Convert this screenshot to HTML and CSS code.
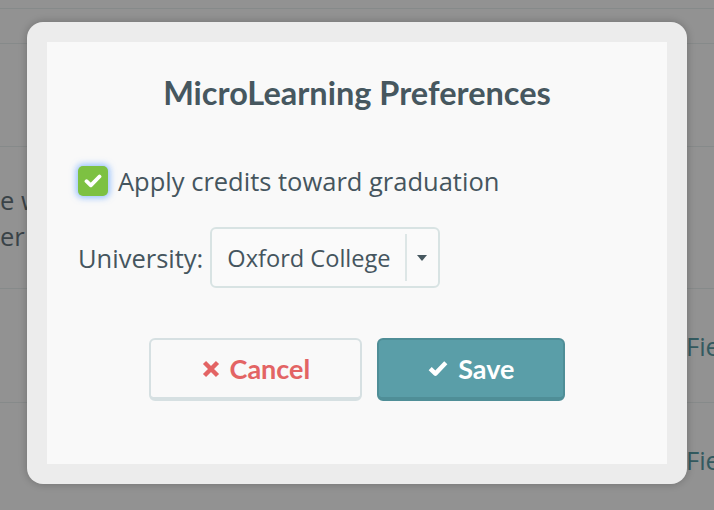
FILE: index.html
```html
<!DOCTYPE html>
<html lang="en">
<head>
    <meta charset="UTF-8">
    <title>MicroLearning Preferences</title>
    <link rel="stylesheet" href="styles.css">
</head>
<body>
    <!-- page behind the dialog -->
    <div class="page">
        <div class="row row-top"></div>
        <div class="row row-head"></div>
        <div class="row row-course"></div>
        <div class="row row-desc">
            <div class="cell-main">e will be<br>er</div>
        </div>
        <div class="row row-item">
            <div class="cell-main"></div>
            <div class="cell-link"><a href="#">Fie</a></div>
        </div>
        <div class="row row-item">
            <div class="cell-main"></div>
            <div class="cell-link"><a href="#">Fie</a></div>
        </div>
    </div>

    <div class="overlay">
        <div class="modal">
            <div class="modal-body">
                <h2 class="modal-title">MicroLearning Preferences</h2>

                <label class="check-row">
                    <span class="checkbox">
                        <svg class="icon" width="18" height="14" viewBox="0 0 18 14">
                            <path d="M2.5 7.2 L6.8 11.3 L15.5 2.5" fill="none" stroke="#fff" stroke-width="3.8" stroke-linecap="round" stroke-linejoin="round"/>
                        </svg>
                    </span>
                    Apply credits toward graduation
                </label>

                <div class="field-row">
                    <span class="field-label">University:</span>
                    <div class="select">
                        <span class="select-value">Oxford College</span>
                        <span class="select-sep"></span>
                        <span class="select-caret"></span>
                    </div>
                </div>

                <div class="actions">
                    <button class="btn btn-cancel">
                        <svg class="icon" width="18" height="18" viewBox="0 0 18 18">
                            <path d="M2.5 2.5 L15.5 15.5 M15.5 2.5 L2.5 15.5" fill="none" stroke="#e36464" stroke-width="4.4"/>
                        </svg>
                        Cancel
                    </button>
                    <button class="btn btn-save">
                        <svg class="icon" width="20" height="17" viewBox="0 0 20 17">
                            <path d="M2.2 8.6 L7.4 13.6 L17.8 2.8" fill="none" stroke="#fff" stroke-width="4.4" stroke-linejoin="round"/>
                        </svg>
                        Save
                    </button>
                </div>
            </div>
        </div>
    </div>
</body>
</html>
```

FILE: styles.css
```css
*{
    margin: 0;
    padding: 0;
    box-sizing: border-box;
}
body{
    background: #fff;
    font-family: "Open Sans", "Liberation Sans", sans-serif;
    color: #455a64;
    overflow: hidden;
}

/* page behind */
.page{
    width: 714px;
}
.row{
    border-bottom: 1px solid #ebf1f1;
    display: grid;
    grid-template-columns: 686px 1fr;
    align-items: center;
    font-size: 25.5px;
    line-height: 36px;
}
.row-top{
    height: 9px;
}
.row-head{
    height: 35px;
}
.row-course{
    height: 103px;
}
.row-desc{
    height: 142px;
    color: #66757e;
}
.row-item{
    height: 114px;
}
.cell-link{
    overflow: hidden;
    white-space: nowrap;
}
.cell-link a{
    color: #5a9ea8;
    text-decoration: none;
}

/* dialog */
.overlay{
    position: fixed;
    top: 0;
    left: 0;
    right: 0;
    bottom: 0;
    background: rgba(0, 0, 0, .427);
    display: flex;
    justify-content: center;
    align-items: flex-start;
    padding-top: 22px;
}
.modal{
    width: 660px;
    padding: 20px;
    background: #ececec;
    border-radius: 16px;
    box-shadow: 0 0 10px rgba(0, 0, 0, .25);
}
.modal-body{
    background: #f9f9f9;
    height: 422px;
    padding: 32px 31px 0;
    display: flex;
    flex-direction: column;
}
.modal-title{
    font-family: Lato, "Open Sans", sans-serif;
    font-weight: 700;
    font-size: 32.5px;
    line-height: 38px;
    color: #46575f;
    text-align: center;
}

.check-row{
    margin-top: 54px;
    display: flex;
    align-items: center;
    font-size: 25.5px;
    line-height: 30px;
    color: #45555e;
}
.checkbox{
    width: 30px;
    height: 30px;
    margin-right: 10px;
    background: #7dc142;
    border-radius: 5px;
    box-shadow: 0 0 6px 2px rgba(110, 170, 255, .7);
    display: flex;
    align-items: center;
    justify-content: center;
}

.field-row{
    margin-top: 31px;
    display: flex;
    align-items: center;
    font-size: 25.5px;
    color: #45555e;
}
.field-label{
    margin-right: 7px;
}
.select{
    width: 230px;
    height: 61px;
    border: 2px solid #d8e3e3;
    border-radius: 6px;
    background: #fafafa;
    display: flex;
    align-items: center;
    padding-left: 15px;
}
.select-value{
    font-size: 23.6px;
    flex: 1;
}
.select-sep{
    width: 2px;
    height: 47px;
    background: #dde6e6;
}
.select-caret{
    margin: 0 11px 0 10px;
    border-left: 5.5px solid transparent;
    border-right: 5.5px solid transparent;
    border-top: 6px solid #46575f;
}

.actions{
    margin-top: 50px;
    display: flex;
    justify-content: center;
    gap: 15px;
}
.btn{
    height: 63px;
    padding: 0 49px;
    border-radius: 6px;
    border: 2px solid;
    border-bottom-width: 4px;
    font-family: Lato, "Open Sans", sans-serif;
    font-weight: 700;
    font-size: 27px;
    display: flex;
    align-items: center;
    gap: 10px;
    cursor: pointer;
}
.icon{
    flex-shrink: 0;
}
.btn-cancel{
    padding: 0 50px 0 51px;
    background: #f9f9f9;
    border-color: #d6e0e2;
    color: #e36464;
}
.btn-save{
    background: #5a9ea8;
    border-color: #4f8e97;
    color: #fff;
}
```
